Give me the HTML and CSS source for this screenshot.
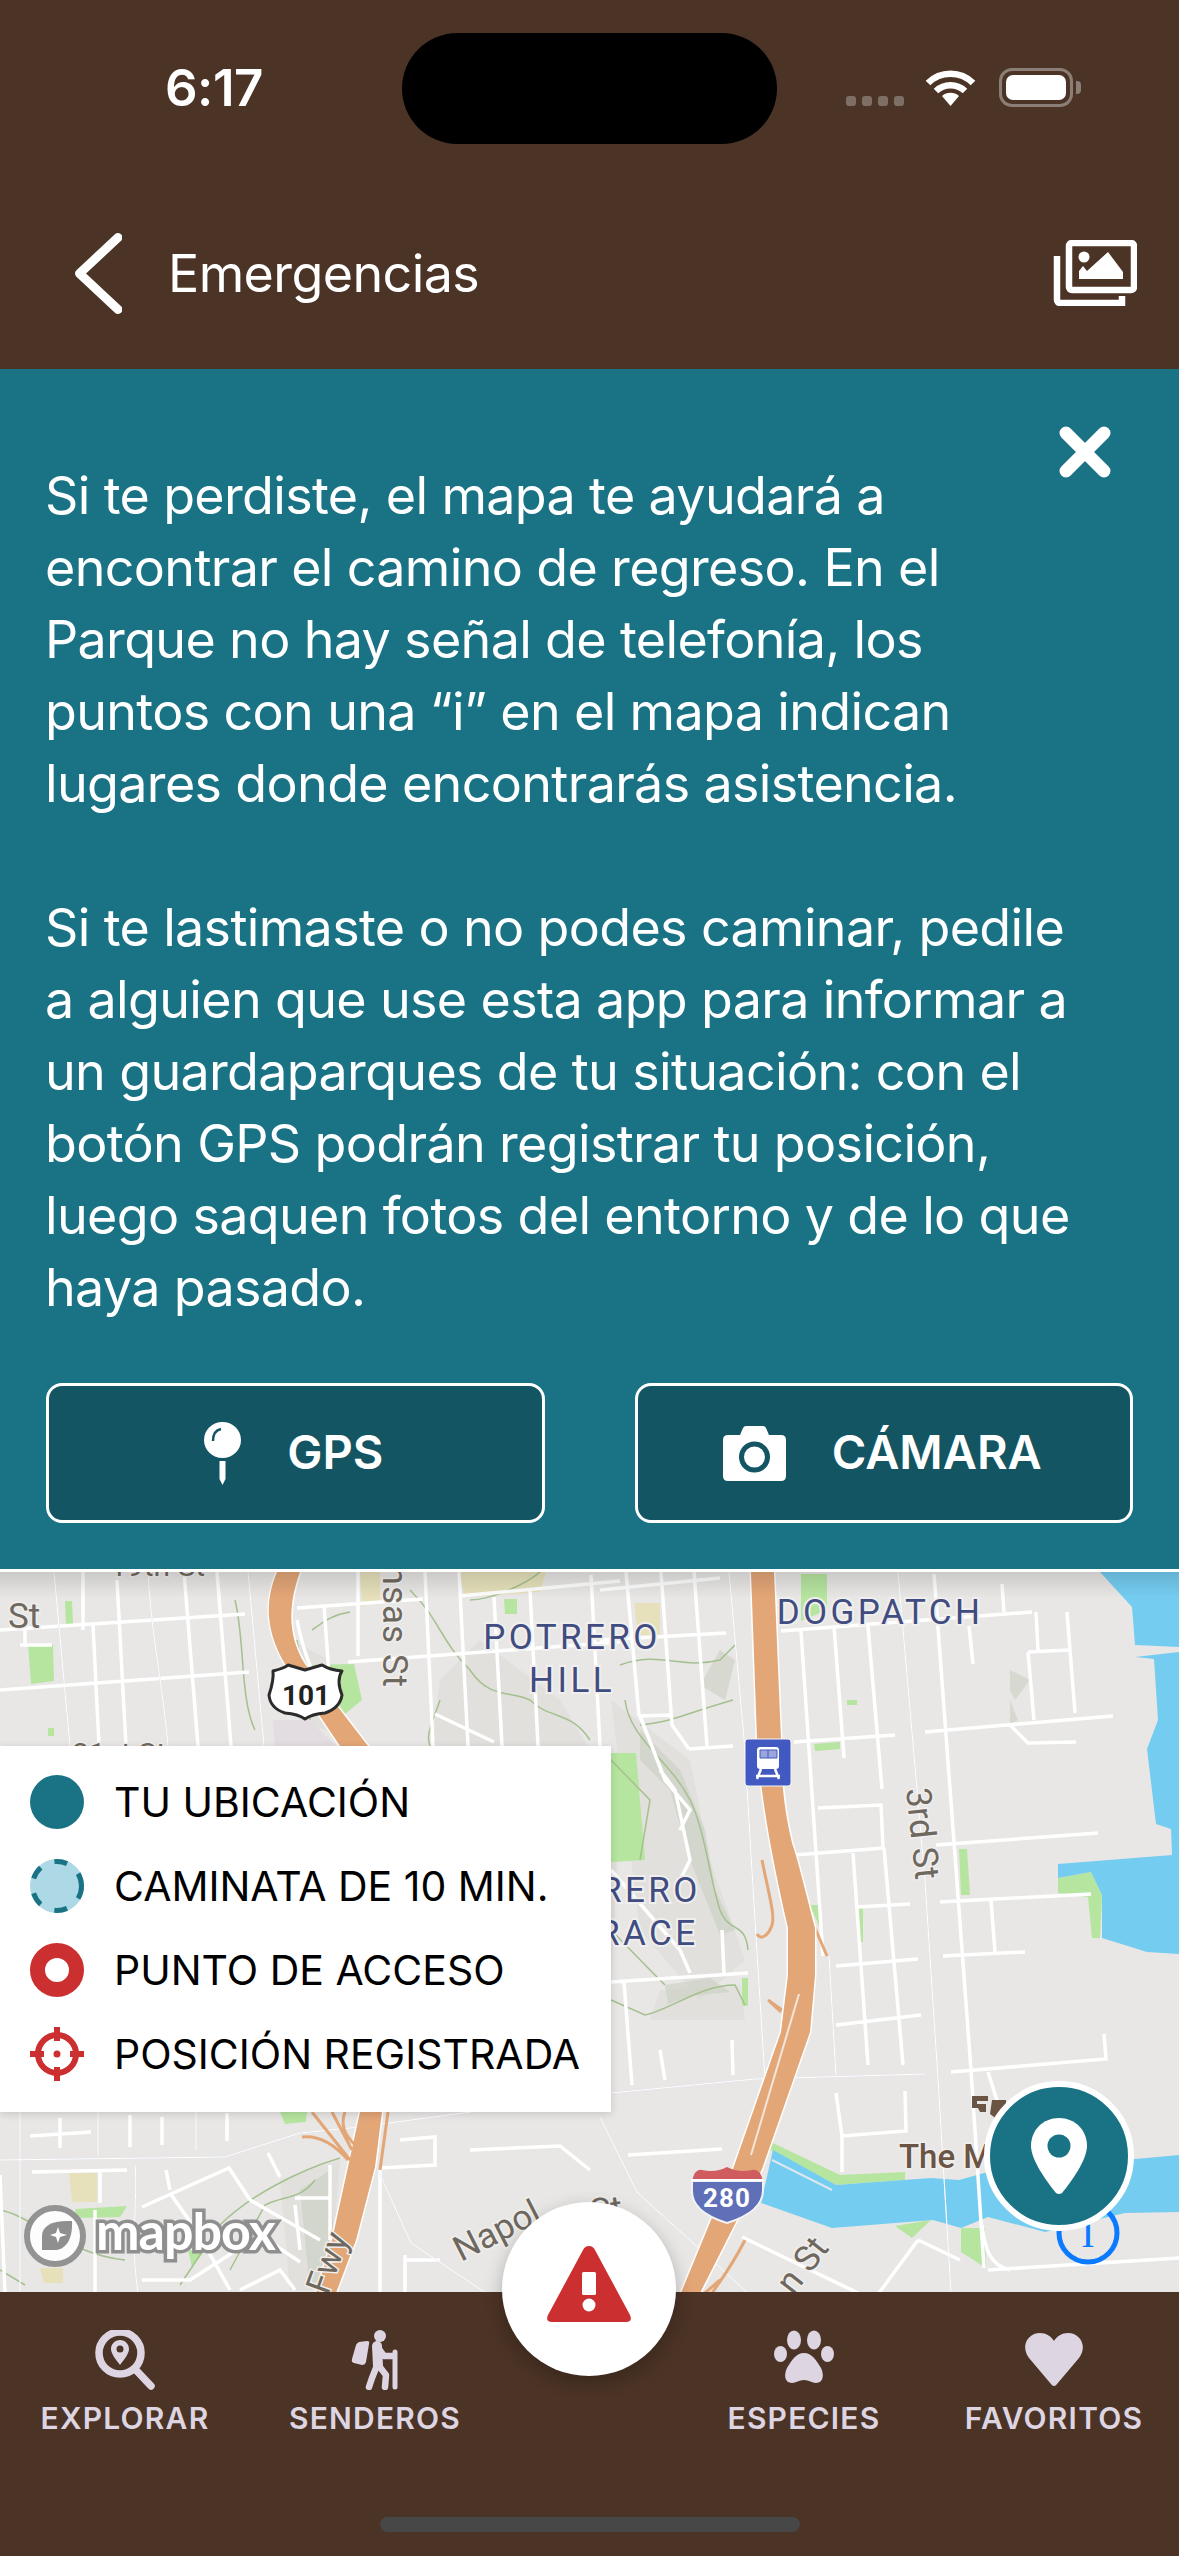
FILE: index.html
```html
<!DOCTYPE html>
<html lang="es">
<head>
    <meta charset="UTF-8">
    <meta name="viewport" content="width=device-width, initial-scale=1.0">
    <title>Emergencias</title>
    <link rel="stylesheet" href="styles.css">
</head>
<body>
<div class="screen">
    <header class="topbar">
        <div class="statusbar">
            <span class="clock">6:17</span>
            <span class="island"></span>
            <span class="signal"><i></i><i></i><i></i><i></i></span>
            <svg class="wifi" viewBox="0 0 51 37">
                <path class="wifi-arc" d="M3 14A32 32 0 0 1 48 14"/>
                <path class="wifi-arc" d="M11 22A21 21 0 0 1 40 22"/>
                <path class="wifi-fill" d="M25.5 37L17 27A13 13 0 0 1 34 27Z"/>
            </svg>
            <span class="battery"><span class="battery-level"></span></span>
            <span class="battery-nub"></span>
        </div>
        <div class="appbar">
            <svg class="back-icon" viewBox="0 0 47 81"><path d="M43 4.500L4.500 40.500L43 76.500"/></svg>
            <h1 class="appbar-title">Emergencias</h1>
            <svg class="gallery-icon" viewBox="0 0 86 66">
                <rect class="line" x="18" y="3" width="65" height="47" rx="3"/>
                <path class="line" d="M6 16V60A3 3 0 0 0 9 63H71V56"/>
                <circle class="solid" cx="33" cy="17" r="5.500"/>
                <path class="solid" d="M28 39V31L32 26L36 31L57 12L72 32V39Z"/>
            </svg>
        </div>
    </header>

    <section class="info-panel">
        <svg class="close-icon" viewBox="0 0 52 52"><path d="M7 7L45 45M45 7L7 45"/></svg>
        <p class="info-text">Si te perdiste, el mapa te ayudará a<br>encontrar el camino de regreso. En el<br>Parque no hay señal de telefonía, los<br>puntos con una “i” en el mapa indican<br>lugares donde encontrarás asistencia.<br><br>Si te lastimaste o no podes caminar, pedile<br>a alguien que use esta app para informar a<br>un guardaparques de tu situación: con el<br>botón GPS podrán registrar tu posición,<br>luego saquen fotos del entorno y de lo que<br>haya pasado.</p>
        <div class="info-actions">
            <button class="action-btn">
                <svg class="gps-icon" viewBox="0 0 37 63">
                    <ellipse class="solid" cx="18.500" cy="18" rx="18.500" ry="18"/>
                    <path class="shine" d="M9 19C9 12 12 8 17 7"/>
                    <path class="solid" d="M15.500 39H21.500V57L18.500 63L15.500 57Z"/>
                </svg>
                <span class="action-label">GPS</span>
            </button>
            <button class="action-btn">
                <svg class="camera-icon" viewBox="0 0 63 55">
                    <path class="solid" d="M5 9H17L20 2Q21 0 23 0H40Q42 0 43 2L46 9H58Q63 9 63 14V50Q63 55 58 55H5Q0 55 0 50V14Q0 9 5 9Z"/>
                    <circle class="lens" cx="31.500" cy="31" r="13"/>
                </svg>
                <span class="action-label">CÁMARA</span>
            </button>
        </div>
    </section>

    <section class="map">
        <svg class="map-canvas" viewBox="0 1572 1179 721">
            <defs>
                <g id="majors">
                    <path class="w14" d="M54 1572L70 1746M148 1572C152 1640 162 1680 168 1746M248 1572L264 1746"/>
                    <path class="w14" d="M729 1572L744 1739L756 1937L765 2079L772 2115"/>
                    <path class="w22" d="M898 1572L925 1881L938 2079L951 2293"/>
                    <path class="w16" d="M611 2093L755 2079L925 2074"/>
                    <path class="w16" d="M0 2160L225 2157L300 2133L360 2127L611 2093"/>
                    <path class="w10" d="M20 2112V2293M98 2112V2155M196 2112V2150M135 2165C138 2200 130 2240 138 2293"/>
                    <path class="w14" d="M378 2170L411 2243L486 2293"/>
                    <path class="w14" d="M600 2117L637 2192L748 2293"/>
                    <path class="w14" d="M829 1956L836 2075"/>
                </g>
            </defs>

            <rect class="land" x="0" y="1572" width="1179" height="721"/>

            <!-- relieve -->
            <path class="hill" d="M480 1640L560 1700L620 1800L611 1990L500 1900L430 1760L440 1680Z"/>
            <path class="hill" d="M611 1700L690 1760L710 1860L745 1960L700 2000L640 1930Z"/>
            <path class="hill" d="M660 1990L740 1985L745 2020L650 2020Z"/>
            <path class="hill" d="M290 1640L330 1660L350 1740L300 1720Z"/>
            <path class="hill" d="M280 2180L340 2160L330 2290L290 2290Z"/>
            <path class="ridge" d="M640 1730L680 1770L705 1830L715 1890L735 1930L720 1935L690 1860L670 1790L640 1760Z"/>
            <path class="ridge" d="M665 1985L710 1978L730 1992L690 1996L668 2004Z"/>
            <path class="ridge" d="M700 1685L720 1650L735 1660L725 1700Z"/>
            <path class="ridge" d="M300 2190L330 2170L335 2260L310 2290Z"/>
            <path class="ridge" d="M1010 1670L1030 1680L1015 1700L1010 1690Z"/>
            <path class="ridge" d="M1010 1700L1018 1720L1010 1725Z"/>

            <!-- parques -->
            <path class="beige" d="M459 1572H546L540 1592L465 1597Z"/>
            <path class="beige" d="M360 1572H380V1601L362 1606Z"/>
            <path class="beige" d="M634 1603H660V1635H638Z"/>
            <path class="beige" d="M69 2173H97V2202H72Z"/>
            <path class="beige" d="M40 2268H63V2283H44Z"/>
            <path class="pinkish" d="M273 1720H310L336 1746H275Z"/>
            <path class="park" d="M28 1644H53L54 1681L31 1684Z"/>
            <path class="park" d="M504 1599H517V1614H505Z"/>
            <path class="park" d="M65 1601H72L73 1624H66Z"/>
            <path class="park" d="M48 1728H54V1736H48Z"/>
            <path class="park" d="M312 1665L354 1664L362 1700L345 1714L320 1700Z"/>
            <path class="park" d="M801 1574H827V1610L801 1621Z"/>
            <path class="park" d="M611 1753H636L645 1860L611 1862Z"/>
            <path class="park" d="M847 1700H857V1705H847Z"/>
            <path class="park" d="M814 1744L840 1742V1749L815 1751Z"/>
            <path class="park" d="M810 1905H818L822 1933Z"/>
            <path class="park" d="M857 1908H863V1942H860Z"/>
            <path class="park" d="M959 1849H967L970 1895H961Z"/>
            <path class="park" d="M742 1978H748V2006H742Z"/>
            <path class="park" d="M75 2209L127 2206L120 2217L76 2218Z"/>
            <path class="park" d="M188 2250L204 2252L192 2267Z"/>
            <path class="park" d="M275 2100L308 2100L306 2122L285 2124Z"/>
            <path class="park" d="M773 2143L840 2175L905 2172V2180L836 2185L770 2150Z"/>
            <path class="park" d="M895 2226L931 2220L912 2238Z"/>
            <path class="park" d="M961 2228H985L986 2268L961 2252Z"/>
            <path class="park" d="M1058 1878L1091 1872L1102 1895L1100 1938H1092L1088 1897L1058 1893Z"/>

            <!-- agua -->
            <path class="water" d="M1100 1572L1132 1607L1135 1645L1179 1647V1652L1135 1657L1154 1659L1158 1720L1147 1749L1156 1824L1171 1829L1172 1855L1058 1864L1058 1878L1091 1872L1102 1895L1102 1938L1147 1952L1179 1954V1572Z"/>
            <path class="water" d="M773 2150L836 2185L931 2178L959 2180L984 2173L1179 2155V2212L1125 2213L1045 2232L988 2217L961 2228L933 2220L832 2228L761 2203Z"/>
            <path class="pier" d="M772 2160L832 2190"/>

            <!-- curvas de nivel -->
            <path class="contour" d="M235 1600C245 1640 240 1700 255 1730M297 1640L310 1720M350 1612C330 1615 320 1625 312 1630M410 1590C440 1620 440 1640 470 1670C490 1700 510 1690 530 1700C550 1720 570 1710 590 1740M440 1700C430 1730 420 1740 440 1760M620 1665C660 1650 680 1670 720 1660L735 1645M625 1700C630 1740 670 1760 690 1800C705 1830 710 1880 720 1910C730 1935 745 1920 748 1950M640 1725C680 1720 680 1715 733 1700M611 1760L650 1800L640 1860M611 1930L650 1970L665 1985M611 2000L645 2015C670 2010 700 1985 735 1985L745 2005M0 2210C30 2215 70 2255 125 2260M180 2285L220 2225C250 2195 300 2170 340 2158M230 2270L265 2205C285 2195 300 2200 315 2180M0 2270L25 2285M470 1600C490 1600 525 1585 540 1572"/>

            <!-- calles -->
            <path class="minor" d="M83 1572V1630M93 1625L99 1746M117 1580L126 1746M184 1572L198 1746M217 1572L231 1746M0 1630L245 1614M0 1690L249 1672M20 1645H52M25 1628V1645M297 1608L423 1599M348 1662L620 1642M459 1596L620 1581M324 1606L330 1688M358 1572V1656M425 1572L433 1746M459 1572L468 1746M494 1597L502 1746M530 1590L538 1746M591 1575L600 1746M435 1714L494 1742M297 1620C305 1660 312 1670 335 1720"/>
            <path class="minor" d="M781 1631L1032 1612M600 1640L726 1633M794 1742L895 1735M925 1732L1113 1716M794 1855L884 1848M936 1845L1098 1833M818 1808L881 1805L883 1848M857 1907L910 1904M940 1902L1091 1894M836 1966L918 1959M943 1956L1025 1952M836 2025L921 2015M951 2072L1106 2059L1104 2034M801 1631L823 1956M834 1626L844 1758M868 1626L882 1789M853 1853L868 2065M884 1848L903 2065M934 1574L971 2070L984 2268M991 1900L995 1952M1002 1584L1004 1612M1036 1612L1038 1650M1028 1652L1069 1650M1028 1652L1034 1720M1067 1612L1075 1713M1010 1725L1028 1743L1076 1742M969 1626L973 1664M600 1590L720 1578"/>
            <path class="minor" d="M626 1572L639 1716M661 1572L672 1725M694 1572L707 1746M689 1749L733 1746M672 1725L689 1749M639 1716L670 1715M640 1716L665 1780L690 1810L680 1830M660 1770L675 1790L690 1860L680 1880M611 1982L748 1973M624 1982L632 2085M660 2050L665 2080M732 2040L733 2075M722 1930L724 1973M611 1870L680 1950L690 1973"/>
            <path class="minor" d="M628 2155L722 2149M836 2093L842 2136L906 2131L905 2091M842 2136V2172M742 2237L858 2293M918 2240L879 2293M918 2240L960 2260M988 2270L1179 2258M982 2225C985 2250 990 2265 1010 2270M988 2072L1000 2110"/>
            <path class="minor" d="M30 2136L91 2132M60 2118V2148M130 2115V2147M162 2117V2145M227 2113V2141M32 2172L127 2170M100 2172V2203M166 2170L170 2190M142 2207L229 2168L250 2200M268 2153L280 2177M170 2193L198 2233L230 2290M250 2200L320 2240M142 2280H190L260 2235L300 2262M295 2205L300 2250M295 2198H330M0 2175L5 2293M95 2210V2293M240 2290L280 2270L295 2290M330 2165V2240M400 2140L435 2137V2165L380 2168M380 2170V2293M405 2293V2255M405 2260H440M470 2150L560 2146L590 2170"/>
            <use href="#majors" class="road-casing"/>
            <use href="#majors" class="road-fill"/>

            <!-- autopistas -->
            <path class="ramp" d="M762 1860C770 1900 775 1915 772 1925C768 1937 760 1940 757 1934M809 1914L827 1956M768 2000L782 2010M770 2002L781 2012"/>
            <path class="freeway" d="M751 1572L757 1739C760 1790 770 1850 788 1928V1975L781 2032L733 2169L711 2220L681 2293H700L737 2220L762 2169L810 2032L815 1975V1928C805 1890 798 1860 792 1843C782 1800 781 1770 781 1739L774 1572Z"/>
            <path class="slit" d="M799 1994L751 2155"/>
            <path class="freeway" d="M277 1572C265 1600 265 1630 285 1664L340 1746H368L305 1664C290 1640 286 1610 300 1572Z"/>
            <path class="freeway" d="M360 2112L348 2167L332 2240L316 2293H336L356 2240L375 2167L382 2112Z"/>
            <path class="ramp" d="M312 2112L350 2160M332 2112L352 2150M345 2112C340 2125 345 2135 355 2145M302 2137C320 2135 335 2145 348 2160M388 2112L380 2170"/>
            <path class="ramp" d="M745 2240C735 2260 725 2275 712 2293M720 2280L705 2293"/>

            <!-- rotulos -->
            <text class="place" x="572" y="1649">POTRERO</text>
            <text class="place" x="572" y="1692">HILL</text>
            <text class="place" x="880" y="1624">DOGPATCH</text>
            <text class="place" x="612" y="1902">POTRERO</text>
            <text class="place" x="612" y="1945">TERRACE</text>
            <text class="street" x="8" y="1628">St</text>
            <text class="street small" x="110" y="1576">19th St</text>
            <text class="street small" x="72" y="1764">21st St</text>
            <text class="street street-wide" transform="translate(383 1688) rotate(90)" text-anchor="end">Kansas St</text>
            <text class="street" transform="translate(906 1789) rotate(84)">3rd St</text>
            <text class="street" transform="translate(461 2262) rotate(-27)">Napol</text>
            <text class="street" transform="translate(592 2224) rotate(-8)">St</text>
            <text class="street" transform="translate(328 2296) rotate(-70)">Fwy</text>
            <text class="street" transform="translate(793 2296) rotate(-52)">n St</text>
            <text class="poi" x="899" y="2168">The Mission</text>
            <path class="poi-mark" d="M972 2096H988V2101H977V2104H986V2112H980L978 2108H972ZM992 2100H1006V2116L998 2120L990 2114Z"/>

            <!-- escudos -->
            <path class="shield-101" d="M273 1671Q285 1668 288 1665L305 1670L322 1665Q330 1670 342 1671Q336 1680 342 1695Q340 1708 325 1713Q312 1714 305 1719Q298 1714 285 1713Q270 1708 269 1695Q274 1680 273 1671Z"/>
            <text class="shield-101-text" x="306" y="1705">101</text>
            <path class="shield-blue" d="M692 2181H763V2190Q763 2212 727 2223Q691 2212 692 2190Z"/>
            <path class="shield-red" d="M692 2181Q695 2168 702 2170Q716 2173 727 2167Q738 2173 752 2170Q760 2168 763 2181Z"/>
            <path class="shield-line" d="M691 2180H764"/>
            <text class="shield-280-text" x="727" y="2207">280</text>
            <rect class="metro-bg" x="745" y="1739" width="46" height="47" rx="3"/>
            <rect class="metro-train" x="757" y="1747" width="22" height="22" rx="3"/>
            <path class="metro-window" d="M760 1750H777V1758H760ZM768 1750V1758"/>
            <path class="metro-track" d="M761 1769L757 1779M775 1769L779 1779M756 1776H780"/>

            <!-- marca de agua -->
            <circle class="mb-ring" cx="55" cy="2236" r="28"/>
            <path class="mb-mark" d="M42 2250V2236C42 2226 52 2220 72 2221C73 2240 65 2250 55 2250Z"/>
            <path class="mb-star" d="M58 2227L60 2233L67 2235L60 2237L58 2243L56 2237L50 2235L56 2233Z"/>
            <text class="mb-text" x="96" y="2250">mapbox</text>

            <!-- punto de informacion -->
            <circle class="info-ring" cx="1088" cy="2233" r="29"/>
            <text class="info-glyph" x="1088" y="2247">I</text>
        </svg>
        <div class="map-shadow"></div>

        <ul class="legend">
            <li class="legend-row">
                <svg class="legend-icon" viewBox="0 0 54 54"><circle class="teal" cx="27" cy="27" r="27"/></svg>
                TU UBICACIÓN
            </li>
            <li class="legend-row">
                <svg class="legend-icon" viewBox="0 0 54 54"><circle class="pale" cx="27" cy="27" r="27"/><circle class="dash" cx="27" cy="27" r="24.500"/></svg>
                CAMINATA DE 10 MIN.
            </li>
            <li class="legend-row">
                <svg class="legend-icon" viewBox="0 0 54 54"><circle class="ring" cx="27" cy="27" r="19.500"/></svg>
                PUNTO DE ACCESO
            </li>
            <li class="legend-row">
                <svg class="legend-icon" viewBox="0 0 54 54">
                    <circle class="target" cx="27" cy="27" r="19"/>
                    <path class="target" d="M27 0V14M27 40V54M0 27H14M40 27H54"/>
                    <circle class="target-dot" cx="27" cy="27" r="3.500"/>
                </svg>
                POSICIÓN REGISTRADA
            </li>
        </ul>

        <button class="locate-btn">
            <svg viewBox="0 0 56 76">
                <path class="solid" d="M28 0C44 0 56 12 56 28C56 42 40 64 31 75Q28 77 25 75C16 64 0 42 0 28C0 12 12 0 28 0Z"/>
                <circle class="hole" cx="28" cy="28" r="11.500"/>
            </svg>
        </button>
    </section>

    <nav class="tabbar">
        <a class="tab">
            <svg class="tab-icon" viewBox="0 0 60 60">
                <circle class="tab-line" cx="25" cy="23" r="21"/>
                <path class="tab-line" d="M40 39L56 56"/>
                <path class="tab-solid" d="M25 10C20 10 16 14 16 19C16 24 22 31 25 35C28 31 34 24 34 19C34 14 30 10 25 10ZM25 15.500A3.500 3.500 0 1 1 25 22.500A3.500 3.500 0 1 1 25 15.500Z" fill-rule="evenodd"/>
            </svg>
            EXPLORAR
        </a>
        <a class="tab">
            <svg class="tab-icon" viewBox="0 0 60 60">
                <circle class="tab-solid" cx="35" cy="6" r="6"/>
                <path class="tab-solid" d="M14 12L22 11Q25 11 24 14L21 32Q20 35 17 35L9 33Q6 32 7 29L11 15Q12 13 14 12Z"/>
                <path class="tab-thick" d="M32 16L33 36"/>
                <path class="tab-limb" d="M33 18L39 26L47 26M31 38L27 48L24 57M34 36L41 45L40 57"/>
                <path class="tab-pole" d="M50 22V57"/>
            </svg>
            SENDEROS
        </a>
        <span class="tab-gap"></span>
        <a class="tab">
            <svg class="tab-icon" viewBox="0 0 60 60">
                <ellipse class="tab-solid" cx="20" cy="10" rx="7" ry="9.500"/>
                <ellipse class="tab-solid" cx="40" cy="10" rx="7" ry="9.500"/>
                <ellipse class="tab-solid" cx="6.500" cy="24" rx="6.500" ry="8"/>
                <ellipse class="tab-solid" cx="53.500" cy="24" rx="6.500" ry="8"/>
                <path class="tab-solid" d="M30 23C38 23 42 30 47 38C50 44 50 53 42 53C38 53 35 50 30 50C25 50 22 53 18 53C10 53 10 44 13 38C18 30 22 23 30 23Z"/>
            </svg>
            ESPECIES
        </a>
        <a class="tab">
            <svg class="tab-icon" viewBox="0 0 60 60">
                <path class="tab-solid" d="M30 56Q28 56 27 54L5 28C-4 16 4 3 16 3C22 3 27 6 30 11C33 6 38 3 44 3C56 3 64 16 55 28L33 54Q32 56 30 56Z"/>
            </svg>
            FAVORITOS
        </a>
        <button class="alert-btn">
            <svg viewBox="0 0 84 76">
                <path class="alert-tri" d="M42 0Q46 0 48 4L83 69Q86 76 79 76H5Q-2 76 1 69L36 4Q38 0 42 0Z"/>
                <rect class="solid" x="35" y="26" width="14" height="23" rx="1.500"/>
                <circle class="solid" cx="42" cy="59" r="6.500"/>
            </svg>
        </button>
        <span class="home-bar"></span>
    </nav>
</div>
</body>
</html>
```

FILE: styles.css
```css
* {
    box-sizing: border-box;
}
body {
    margin: 0;
    background: #4b3325;
    font-family: 'Inter', 'Liberation Sans', sans-serif;
}
.solid {
    fill: #fff;
}
.screen {
    width: 1179px;
    height: 2556px;
    display: flex;
    flex-direction: column;
    overflow: hidden;
}

/* barra superior */
.topbar {
    height: 369px;
    background: #4b3325;
    color: #fff;
}
.statusbar {
    height: 177px;
    padding: 33px 0 0 165px;
    display: flex;
    align-items: flex-start;
}
.clock {
    width: 237px;
    font-size: 51px;
    font-weight: 600;
    line-height: 110px;
    letter-spacing: -0.5px;
}
.island {
    width: 375px;
    height: 111px;
    background: #000;
    border-radius: 56px;
}
.signal {
    margin: 63px 21px 0 69px;
    display: flex;
    gap: 6px;
}
.signal i {
    width: 10px;
    height: 10px;
    border-radius: 3px;
    background: #7e6f66;
}
.wifi {
    width: 51px;
    height: 37px;
    margin-top: 36px;
}
.wifi-arc {
    fill: none;
    stroke: #fff;
    stroke-width: 6.5px;
}
.wifi-fill {
    fill: #fff;
}
.battery {
    width: 74px;
    height: 39px;
    margin: 35px 0 0 23px;
    padding: 4px;
    border: 3px solid #8b7e76;
    border-radius: 13px;
}
.battery-level {
    display: block;
    height: 100%;
    background: #fff;
    border-radius: 7px;
}
.battery-nub {
    width: 5px;
    height: 13px;
    margin: 48px 0 0 3px;
    background: #8b7e76;
    border-radius: 0 4px 4px 0;
}
.appbar {
    height: 192px;
    padding: 0 42px 0 75px;
    display: flex;
    align-items: center;
}
.back-icon {
    width: 47px;
    height: 81px;
    fill: none;
    stroke: #fff;
    stroke-width: 9px;
    stroke-linecap: round;
    stroke-linejoin: round;
}
.appbar-title {
    flex: 1;
    margin: 0 0 0 46px;
    font-size: 52px;
    font-weight: 400;
    letter-spacing: -0.6px;
}
.gallery-icon {
    width: 86px;
    height: 66px;
}
.gallery-icon .line {
    fill: none;
    stroke: #fff;
    stroke-width: 6.5px;
}

/* panel de ayuda */
.info-panel {
    position: relative;
    height: 1200px;
    padding: 91px 46px 0;
    background: #197385;
    color: #fff;
}
.close-icon {
    position: absolute;
    top: 57px;
    right: 68px;
    width: 52px;
    height: 52px;
    fill: none;
    stroke: #fff;
    stroke-width: 13px;
    stroke-linecap: round;
}
.info-text {
    margin: 0 0 0 -1px;
    font-size: 52px;
    line-height: 72px;
    letter-spacing: -0.65px;
    white-space: nowrap;
}
.info-actions {
    margin-top: 59px;
    display: flex;
    gap: 90px;
}
.action-btn {
    flex: 1;
    height: 140px;
    padding: 0 3px 0 0;
    display: flex;
    align-items: center;
    justify-content: center;
    gap: 46px;
    background: #135563;
    border: 3px solid #fff;
    border-radius: 16px;
    color: #fff;
    font-family: inherit;
    font-size: 47px;
    font-weight: 600;
}
.action-label {
    margin-bottom: 4px;
}
.gps-icon {
    width: 37px;
    height: 63px;
}
.shine {
    fill: none;
    stroke: #135563;
    stroke-width: 2.500px;
}
.camera-icon {
    width: 63px;
    height: 55px;
}
.lens {
    fill: #fff;
    stroke: #135563;
    stroke-width: 5px;
}

/* mapa */
.map {
    position: relative;
    flex: 1;
    border-top: 3px solid #fff;
    overflow: hidden;
}
.map-canvas {
    display: block;
    width: 1179px;
    height: 721px;
}
.map-shadow {
    position: absolute;
    top: 0;
    left: 0;
    width: 100%;
    height: 26px;
    background: linear-gradient(rgba(0, 0, 0, 0.13), rgba(0, 0, 0, 0));
}
.land {
    fill: #e8e7e5;
}
.hill {
    fill: #dcdcd6;
    opacity: 0.6;
}
.ridge {
    fill: #c9cdc0;
    opacity: 0.55;
}
.beige {
    fill: #e6e1bb;
}
.pinkish {
    fill: #e3dce1;
}
.park {
    fill: #b6e5a0;
}
.water {
    fill: #74cdf1;
}
.pier {
    fill: none;
    stroke: #d8e8ee;
    stroke-width: 2px;
}
.contour {
    fill: none;
    stroke: #a5c08f;
    stroke-width: 1.500px;
}
.minor {
    fill: none;
    stroke: #fff;
    stroke-width: 3.500px;
}
.road-casing, .road-fill {
    fill: none;
    stroke-linejoin: round;
}
.road-casing .w10 { stroke-width: 14px; }
.road-casing .w14 { stroke-width: 18px; }
.road-casing .w16 { stroke-width: 20px; }
.road-casing .w22 { stroke-width: 26px; }
.road-fill .w10 { stroke-width: 10px; }
.road-fill .w14 { stroke-width: 14px; }
.road-fill .w16 { stroke-width: 16px; }
.road-fill .w22 { stroke-width: 22px; }
.road-casing {
    stroke: #d7dcec;
}
.road-fill {
    stroke: #fff;
}
.freeway {
    fill: #e3a677;
    stroke: #fff;
    stroke-width: 3px;
    paint-order: stroke;
}
.slit {
    fill: none;
    stroke: #f3e6da;
    stroke-width: 2px;
}
.ramp {
    fill: none;
    stroke: #e3a677;
    stroke-width: 3px;
}
.place {
    font-family: 'Roboto', sans-serif;
    font-size: 35px;
    letter-spacing: 3.400px;
    text-anchor: middle;
    fill: #414c80;
    stroke: #f0efee;
    stroke-width: 4px;
    paint-order: stroke;
}
.street {
    font-family: 'Roboto', sans-serif;
    font-size: 35px;
    fill: #6f685f;
    stroke: #f0efee;
    stroke-width: 3px;
    paint-order: stroke;
}
.street.small {
    font-size: 30px;
}
.street-wide {
    letter-spacing: 1px;
}
.poi {
    font-family: 'Roboto', sans-serif;
    font-size: 33px;
    font-weight: 500;
    fill: #6a5444;
    stroke: #f0efee;
    stroke-width: 3px;
    paint-order: stroke;
}
.poi-mark {
    fill: #6a5444;
}
.shield-101 {
    fill: #fff;
    stroke: #2b2b2b;
    stroke-width: 3px;
    stroke-linejoin: round;
}
.shield-101-text {
    font-family: 'Roboto', sans-serif;
    font-size: 28px;
    font-weight: 700;
    text-anchor: middle;
    fill: #222;
}
.shield-blue {
    fill: #5f6fb8;
    stroke: #f2f2f2;
    stroke-width: 2px;
}
.shield-red {
    fill: #d05c60;
}
.shield-line {
    stroke: #fff;
    stroke-width: 2px;
}
.shield-280-text {
    font-family: 'Roboto', sans-serif;
    font-size: 26px;
    font-weight: 700;
    letter-spacing: 1px;
    text-anchor: middle;
    fill: #fff;
}
.metro-bg {
    fill: #4259c2;
    stroke: #f4f4f4;
    stroke-width: 1px;
}
.metro-train {
    fill: #fff;
}
.metro-window {
    fill: #9aa6dc;
    stroke: #4259c2;
    stroke-width: 1px;
}
.metro-track {
    fill: none;
    stroke: #fff;
    stroke-width: 2.500px;
}
.mb-ring {
    fill: #fff;
    stroke: #8f8f8f;
    stroke-width: 6px;
    opacity: 0.95;
}
.mb-mark {
    fill: #8f8f8f;
}
.mb-star {
    fill: #fff;
}
.mb-text {
    font-family: 'Lato', sans-serif;
    font-size: 52px;
    font-weight: 700;
    letter-spacing: -1px;
    fill: #fff;
    stroke: #8f8f8f;
    stroke-width: 7px;
    paint-order: stroke;
}
.info-ring {
    fill: none;
    stroke: #0a7bff;
    stroke-width: 5px;
}
.info-glyph {
    font-family: 'Liberation Serif', serif;
    font-size: 40px;
    text-anchor: middle;
    fill: #0a7bff;
}

/* leyenda */
.legend {
    position: absolute;
    top: 174px;
    left: 0;
    width: 611px;
    height: 366px;
    margin: 0;
    padding: 14px 0 0 30px;
    list-style: none;
    background: #fff;
    box-shadow: 0 2px 8px rgba(0, 0, 0, 0.15);
}
.legend-row {
    height: 84px;
    display: flex;
    align-items: center;
    gap: 30px;
    font-size: 41px;
    color: #000;
    white-space: nowrap;
}
.legend-icon {
    width: 54px;
    height: 54px;
    flex: none;
}
.teal {
    fill: #197385;
}
.pale {
    fill: #add8e6;
}
.dash {
    fill: none;
    stroke: #197385;
    stroke-width: 5px;
    stroke-dasharray: 13 15;
}
.ring {
    fill: #fff;
    stroke: #cc2f30;
    stroke-width: 15px;
}
.target {
    fill: none;
    stroke: #cc2f30;
    stroke-width: 6px;
}
.target-dot {
    fill: #cc2f30;
}

/* boton de ubicacion */
.locate-btn {
    position: absolute;
    top: 509px;
    left: 984px;
    width: 150px;
    height: 150px;
    padding: 0;
    display: flex;
    align-items: center;
    justify-content: center;
    background: #197385;
    border: 6px solid #fff;
    border-radius: 50%;
}
.locate-btn svg {
    width: 56px;
    height: 76px;
}
.hole {
    fill: #197385;
}

/* navegacion */
.tabbar {
    position: relative;
    height: 264px;
    padding-top: 38px;
    display: grid;
    grid-template-columns: 1fr 1fr 179px 1fr 1fr;
    align-items: start;
    background: #4b3325;
}
.tab {
    display: flex;
    flex-direction: column;
    align-items: center;
    gap: 10px;
    font-size: 30px;
    font-weight: 600;
    line-height: 36px;
    letter-spacing: 1.2px;
    color: #ddd5e1;
}
.tab-icon {
    width: 60px;
    height: 60px;
}
.tab-solid {
    fill: #ddd5e1;
}
.tab-line {
    fill: none;
    stroke: #ddd5e1;
    stroke-width: 7.500px;
    stroke-linecap: round;
}
.tab-thick, .tab-limb, .tab-pole {
    fill: none;
    stroke: #ddd5e1;
    stroke-linecap: round;
    stroke-linejoin: round;
}
.tab-thick {
    stroke-width: 10px;
}
.tab-limb {
    stroke-width: 6.500px;
}
.tab-pole {
    stroke-width: 5px;
}
.alert-btn {
    position: absolute;
    top: -90px;
    left: 502px;
    width: 174px;
    height: 174px;
    padding: 0 0 11px;
    display: flex;
    align-items: center;
    justify-content: center;
    background: #fff;
    border: none;
    border-radius: 50%;
    box-shadow: 0 6px 18px rgba(0, 0, 0, 0.25);
}
.alert-btn svg {
    width: 84px;
    height: 76px;
}
.alert-tri {
    fill: #cc2f30;
}
.home-bar {
    position: absolute;
    left: 380px;
    top: 225px;
    width: 420px;
    height: 15px;
    background: #474747;
    border-radius: 8px;
}
```
